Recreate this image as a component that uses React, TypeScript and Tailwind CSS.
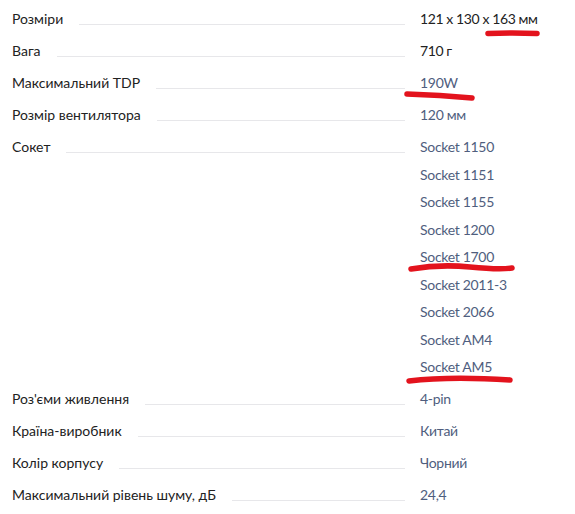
const specs: { label: string; values: string[]; dark?: boolean }[] = [
  { label: "Розміри", values: ["121 x 130 x 163 мм"], dark: true },
  { label: "Вага", values: ["710 г"], dark: true },
  { label: "Максимальний TDP", values: ["190W"] },
  { label: "Розмір вентилятора", values: ["120 мм"] },
  {
    label: "Сокет",
    values: [
      "Socket 1150",
      "Socket 1151",
      "Socket 1155",
      "Socket 1200",
      "Socket 1700",
      "Socket 2011-3",
      "Socket 2066",
      "Socket AM4",
      "Socket AM5",
    ],
  },
  { label: "Роз'єми живлення", values: ["4-pin"] },
  { label: "Країна-виробник", values: ["Китай"] },
  { label: "Колір корпусу", values: ["Чорний"] },
  { label: "Максимальний рівень шуму, дБ", values: ["24,4"] },
];

function SpecRow({ label, values, dark }: { label: string; values: string[]; dark?: boolean }) {
  return (
    <div className="flex items-start">
      <div className="flex flex-1 items-start">
        <span className="text-[14px] leading-5 text-[#222]">{label}</span>
        <div className="ml-4 mr-[15px] mt-[15px] h-px flex-1 bg-[#e7e7ea]" />
      </div>
      <div className="flex w-[143px] flex-col gap-[7.5px]">
        {values.map((v) => (
          <span
            key={v}
            className={
              dark
                ? "text-[14px] leading-5 tracking-[-0.4px] text-[#222]"
                : "text-[14px] leading-5 tracking-[-0.3px] text-[#4f5e7e]"
            }
          >
            {v}
          </span>
        ))}
      </div>
    </div>
  );
}

export default function App() {
  return (
    <div
      className="relative min-h-[514px] w-[575px] bg-white"
      style={{ fontFamily: "Lato, 'Noto Sans', sans-serif" }}
    >
      <div className="flex flex-col gap-3 px-3 pt-[9px]">
        {specs.map((s) => (
          <SpecRow key={s.label} {...s} />
        ))}
      </div>

      {/* red marker annotations */}
      <svg
        className="pointer-events-none absolute left-0 top-0"
        width="575"
        height="514"
        fill="none"
        stroke="#e3131d"
        strokeWidth="5.5"
        strokeLinecap="round"
      >
        <path d="M488 33.5 Q512 32.5 537 33.5" />
        <path d="M407 94 Q440 95 472 98" />
        <path d="M411 269 Q440 264 470 267 T512 268" />
        <path d="M409 381 Q450 376 510 380" />
      </svg>
    </div>
  );
}
